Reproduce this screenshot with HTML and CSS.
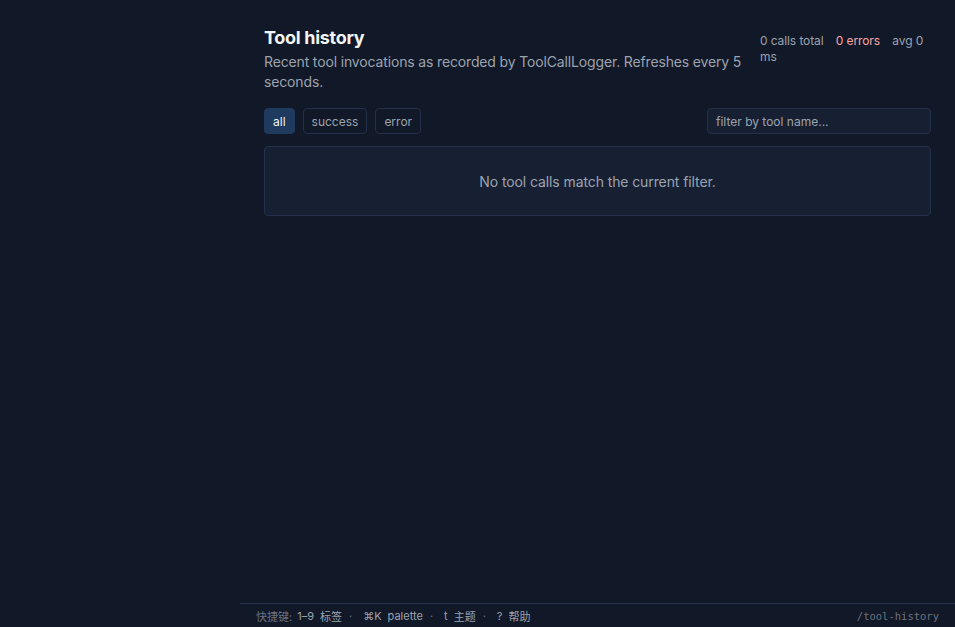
FILE: index.html
```html
<!DOCTYPE html>
<html lang="zh-CN">
<head>
	<meta charset="UTF-8">
	<title>Tool history</title>
<link rel="stylesheet" href="styles.css">
</head>
<body>

<div class="app">
	<aside class="side"></aside>
	<div class="main">
		<div class="page">
			<div class="head">
				<div class="head-text">
					<h1>Tool history</h1>
					<p>Recent tool invocations as recorded by ToolCallLogger. Refreshes every 5 seconds.</p>
				</div>
				<div class="stats">
					<span>0 calls total</span>
					<span class="err">0 errors</span>
					<span>avg 0 ms</span>
				</div>
			</div>
			<div class="bar">
				<div class="tabs">
					<button class="tab tab-on">all</button>
					<button class="tab">success</button>
					<button class="tab">error</button>
				</div>
				<input class="search" type="text" placeholder="filter by tool name...">
			</div>
			<div class="empty">No tool calls match the current filter.</div>
		</div>
		<div class="foot">
			<div class="keys">
				<span class="dim">快捷键:</span>
				<kbd>1–9</kbd><span>标签</span><i>·</i>
				<kbd>⌘K</kbd><span>palette</span><i>·</i>
				<kbd>t</kbd><span>主题</span><i>·</i>
				<kbd>?</kbd><span>帮助</span>
			</div>
			<div class="route">/tool-history</div>
		</div>
	</div>
</div>

</body>
</html>
```

FILE: styles.css
```css
*{margin:0;padding:0;box-sizing:border-box;}
html,body{height:100%;}
body{background:#111827;color:#e5e7eb;font-family:"Inter","Noto Sans CJK SC",sans-serif;}

.app{display:flex;height:100%;}
.side{width:240px;flex:none;}
.main{flex:1;display:flex;flex-direction:column;min-width:0;}
.page{flex:1;padding:26px 24px 0 24px;}

/* 标题 + 统计 */
.head{display:flex;justify-content:space-between;align-items:flex-start;gap:10px;}
.head-text{flex:1;}
.head h1{font-size:18px;line-height:24px;font-weight:700;color:#f3f4f6;margin-bottom:2px;letter-spacing:-0.3px;}
.head p{font-size:14px;line-height:20px;color:#9ca3af;letter-spacing:-0.15px;}
.stats{width:171px;flex:none;font-size:12px;line-height:16px;color:#9ca3af;padding-top:7px;letter-spacing:-0.1px;}
.stats span{margin-right:9px;}
.stats .err{color:#fca5a5;}

/* 过滤栏 */
.bar{display:flex;justify-content:space-between;align-items:center;margin-top:16px;}
.tabs{display:flex;gap:8px;}
.tab{font-family:inherit;font-size:12px;height:26px;padding:0 8px;border:1px solid #243049;border-radius:4px;background:transparent;color:#9ca3af;}
.tab.tab-on{background:#1e3a5f;border-color:#1e3a5f;color:#f3f4f6;}
.search{width:224px;height:26px;font-family:inherit;font-size:12px;padding:0 8px;border:1px solid #243049;border-radius:4px;background:#172033;color:#e5e7eb;outline:none;}
.search::placeholder{color:#9ca3af;}

.empty{margin-top:12px;height:70px;display:flex;align-items:center;justify-content:center;background:#172033;border:1px solid #243049;border-radius:4px;font-size:14px;color:#9ca3af;letter-spacing:-0.1px;}

/* 底栏 */
.foot{height:24px;border-top:1px solid #243049;display:flex;justify-content:space-between;align-items:center;padding:0 16px;font-size:11px;color:#9ca3af;}
.keys{display:flex;align-items:center;}
.keys .dim{color:#6b7280;margin-right:5px;}
.keys kbd{font-family:inherit;color:#9ca3af;margin-right:6px;}
.keys i{font-style:normal;color:#6b7280;margin:0 11px 0 7px;}
.route{color:#6b7280;font-family:"DejaVu Sans Mono",monospace;font-size:10.5px;}
```
